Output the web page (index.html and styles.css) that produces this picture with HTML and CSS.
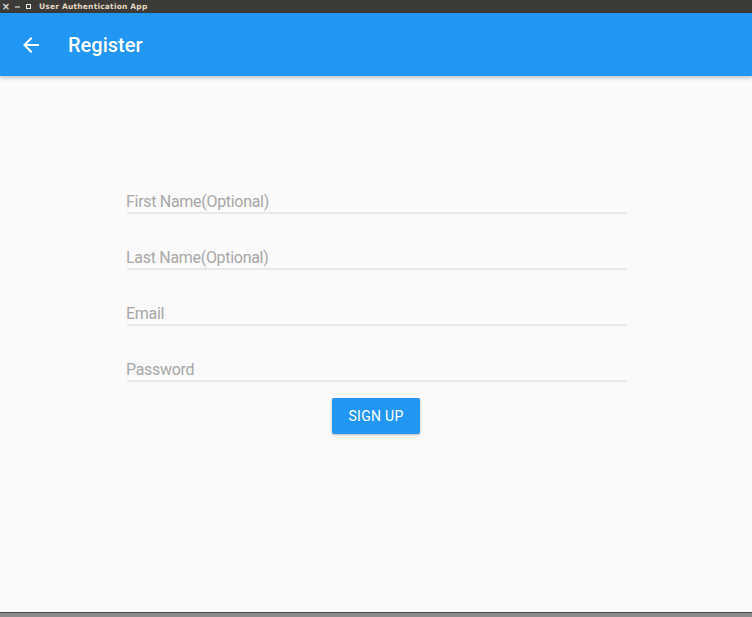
FILE: index.html
```html
<!DOCTYPE html>
<html>
<head>
<meta charset="utf-8">
<link rel="stylesheet" href="styles.css">
</head>
<body>
<div class="window">
  <div class="titlebar">
    <span class="tb-btn tb-close">×</span>
    <span class="tb-btn tb-min"></span>
    <span class="tb-btn tb-max"></span>
    <span class="tb-title">User Authentication App</span>
  </div>
  <header class="appbar">
    <svg class="back" width="24" height="24" viewBox="0 0 24 24"><path fill="#fff" d="M20 11H7.83l5.59-5.59L12 4l-8 8 8 8 1.41-1.41L7.83 13H20v-2z"/></svg>
    <h1 class="appbar-title">Register</h1>
  </header>
  <main class="content">
    <form class="form">
      <div class="field"><span class="label">First Name(Optional)</span></div>
      <div class="field"><span class="label">Last Name(Optional)</span></div>
      <div class="field"><span class="label">Email</span></div>
      <div class="field"><span class="label">Password</span></div>
      <div class="actions"><button type="button" class="btn">SIGN UP</button></div>
    </form>
  </main>
  <div class="bottom"></div>
</div>
</body>
</html>
```
FILE: styles.css
```css
html, body { margin: 0; padding: 0; }
body { background: #fafafa; font-family: Roboto, "Noto Sans", sans-serif; }
.window { width: 752px; height: 617px; display: flex; flex-direction: column; overflow: hidden; }
.titlebar { height: 13px; background: #3c3b37; display: flex; align-items: center; flex-shrink: 0; }
.tb-btn { display: block; color: #dcdcdc; }
.tb-close { font-size: 10px; line-height: 10px; margin-left: 1px; width: 10px; text-align: center; font-family: "DejaVu Sans", sans-serif; font-weight: bold; }
.tb-min { width: 5px; height: 2px; background: #9a9a96; margin-left: 4px; }
.tb-max { width: 3px; height: 3px; border: 1px solid #e8e8e8; margin-left: 6px; }
.tb-title { margin-left: 8px; font-family: "DejaVu Sans", sans-serif; font-weight: bold; font-size: 7.5px; color: #e4d8c2; letter-spacing: 0.2px; }
.appbar { height: 63px; background: #2196f3; display: flex; align-items: center; flex-shrink: 0; box-shadow: 0 2px 4px rgba(0,0,0,0.22); position: relative; z-index: 1; }
.back { margin-left: 19px; }
.appbar-title { margin: 0 0 0 25px; font-size: 20px; font-weight: 500; color: #fff; }
.content { flex: 1; display: flex; justify-content: center; }
.form { width: 500px; padding-top: 82px; margin-left: 2px; }
.field { height: 54px; display: flex; align-items: flex-end; border-bottom: 2px solid #e8e8e8; }
.label { font-size: 16px; line-height: 20px; color: #a8a8a8; letter-spacing: -0.3px; margin-left: -1px; }
.actions { display: flex; justify-content: center; padding-top: 16px; }
.btn { width: 88px; height: 36px; border: 0; border-radius: 2px; background: #2196f3; color: #fff; font-family: Roboto, sans-serif; font-size: 14px; font-weight: 400; letter-spacing: 0.3px; box-shadow: 0 1px 3px rgba(0,0,0,0.25); padding: 0; margin-left: -2px; }
.bottom { height: 4px; background: #8c8c8c; border-top: 1px solid #4a4a4a; flex-shrink: 0; }
```
